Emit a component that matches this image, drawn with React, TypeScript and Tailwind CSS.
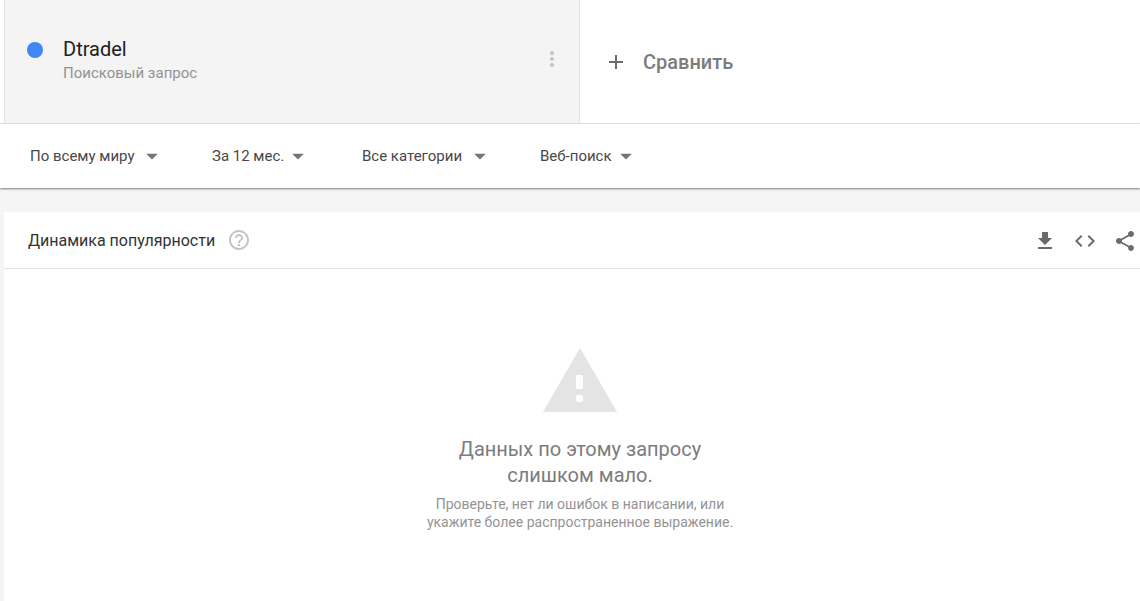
import React, { useState } from "react";
import { MdAdd, MdArrowDropDown, MdCode, MdFileDownload, MdHelpOutline, MdMoreVert, MdShare } from "react-icons/md";

const filters = [
  { id: "geo", label: "Регион", value: "По всему миру", width: "w-32", gap: "mr-[54px]" },
  { id: "time", label: "Период", value: "За 12 мес.", width: "w-[92px]", gap: "mr-[58px]" },
  { id: "category", label: "Категория", value: "Все категории", width: "w-[124px]", gap: "mr-[54px]" },
  { id: "property", label: "Тип поиска", value: "Веб-поиск", width: "w-[92px]", gap: "" },
];

function SearchTerm() {
  const [term, setTerm] = useState("Dtradel");

  return (
    <div className="ml-1 flex w-[576px] items-start border-x border-[#e4e4e4] bg-[#f4f4f4] pt-[37px] pr-[15px] pl-[22px]">
      <span className="mt-[5px] h-4 w-4 shrink-0 rounded-full bg-[#4285f4]" />
      <div className="ml-5 flex min-w-0 flex-1 flex-col">
        <input
          aria-label="Поисковый запрос"
          value={term}
          onChange={(e) => setTerm(e.target.value)}
          className="h-6 w-full bg-transparent text-xl leading-6 text-[#212121] outline-none"
        />
        <span className="text-[15px] leading-6 text-[#929292]">Поисковый запрос</span>
      </div>
      <button aria-label="Ещё" className="mt-2.5 text-[#c4c4c4]">
        <MdMoreVert className="h-6 w-6" />
      </button>
    </div>
  );
}

function FilterBar() {
  return (
    <div className="relative flex h-16 items-center bg-white pl-[30px] shadow-[0_1px_2px_rgba(0,0,0,0.5)]">
      {filters.map((filter) => (
        <div key={filter.id} className={`relative flex items-center ${filter.width} ${filter.gap}`}>
          <select
            aria-label={filter.label}
            className="w-full appearance-none bg-transparent text-[15px] leading-6 text-[#484848] outline-none"
          >
            <option>{filter.value}</option>
          </select>
          <MdArrowDropDown className="pointer-events-none absolute -right-2 h-7 w-7 text-[#757575]" />
        </div>
      ))}
    </div>
  );
}

function EmptyState() {
  return (
    <div className="flex flex-col items-center pt-[79px] pb-16 pl-4 text-center">
      <svg viewBox="0 0 74 64" className="h-16 w-[74px]" aria-hidden="true">
        <path d="M37 0 74 64H0Z" fill="#e4e4e4" />
        <rect x="33" y="27" width="7" height="14" rx="1" fill="#fff" />
        <rect x="33" y="47" width="7" height="7" rx="2" fill="#fff" />
      </svg>
      <p className="mt-6 w-[270px] text-xl leading-[26px] text-[#7c7c7c]">Данных по этому запросу слишком мало.</p>
      <p className="mt-[7px] w-[320px] text-sm leading-[18px] text-[#949494]">
        Проверьте, нет ли ошибок в написании, или укажите более распространенное выражение.
      </p>
    </div>
  );
}

export default function App() {
  return (
    <div className="flex min-h-screen flex-col bg-[#f5f5f5] font-['Roboto','Noto_Sans',sans-serif]">
      <header className="flex h-[124px] border-b border-[#e4e4e4] bg-white">
        <SearchTerm />
        <button className="flex flex-1 items-center pl-6 text-xl font-medium text-[#7c7c7c]">
          <MdAdd className="h-6 w-6 text-[#6b6b6b]" />
          <span className="ml-[15px]">Сравнить</span>
        </button>
      </header>

      <FilterBar />

      <main className="mt-6 ml-1 flex-1 bg-white">
        <div className="flex h-[57px] items-center border-b border-[#e4e4e4] pl-6">
          <h2 className="pt-0.5 text-base text-[#333333]">Динамика популярности</h2>
          <button aria-label="Справка" className="ml-3 text-[#c4c4c4]">
            <MdHelpOutline className="h-6 w-6" />
          </button>
          <div className="ml-auto flex gap-4 pt-0.5 pr-[3px] text-[#6b6b6b]">
            <button aria-label="Скачать">
              <MdFileDownload className="h-6 w-6" />
            </button>
            <button aria-label="Встроить">
              <MdCode className="h-6 w-6" />
            </button>
            <button aria-label="Поделиться">
              <MdShare className="h-6 w-6" />
            </button>
          </div>
        </div>
        <EmptyState />
      </main>
    </div>
  );
}
